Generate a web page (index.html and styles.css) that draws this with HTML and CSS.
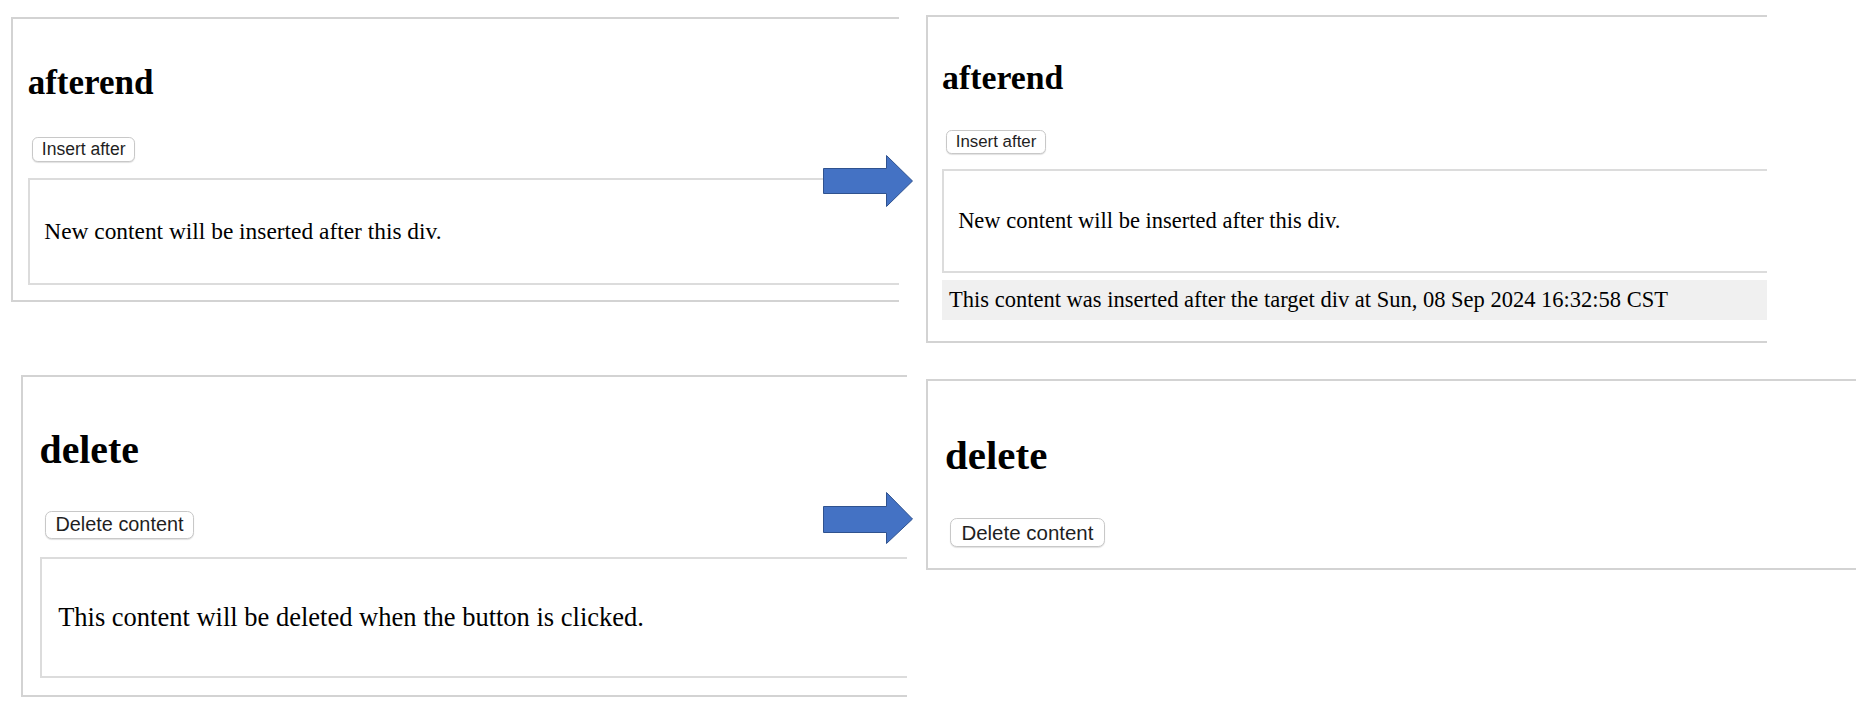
FILE: index.html
```html
<!DOCTYPE html>
<html lang="en">
<head>
<meta charset="utf-8">
<title>insertAdjacentHTML: afterend and delete</title>
<link rel="stylesheet" href="styles.css">
</head>
<body>
<main class="collage">
  <!-- afterend: before the click -->
  <section class="shot shot-a">
    <div class="demo">
      <h2>afterend</h2>
      <button class="demo-btn" type="button">Insert after</button>
      <div class="target"><p>New content will be inserted after this div.</p></div>
    </div>
  </section>

  <!-- afterend: after the click -->
  <section class="shot shot-b">
    <div class="demo">
      <h2>afterend</h2>
      <button class="demo-btn" type="button">Insert after</button>
      <div class="target"><p>New content will be inserted after this div.</p></div>
      <div class="inserted">This content was inserted after the target div at Sun, 08 Sep 2024 16:32:58 CST</div>
    </div>
  </section>

  <!-- delete: before the click -->
  <section class="shot shot-c">
    <div class="demo">
      <h2>delete</h2>
      <button class="demo-btn" type="button">Delete content</button>
      <div class="target"><p>This content will be deleted when the button is clicked.</p></div>
    </div>
  </section>

  <!-- delete: after the click -->
  <section class="shot shot-d">
    <div class="demo">
      <h2>delete</h2>
      <button class="demo-btn" type="button">Delete content</button>
    </div>
  </section>

  <svg class="arrow arrow-top" viewBox="0 0 90 52" width="90" height="52" aria-hidden="true">
    <path d="M0.5 13.5 H63.5 V0.5 L89.5 26 L63.5 51.5 V38.5 H0.5 Z" />
  </svg>
  <svg class="arrow arrow-bottom" viewBox="0 0 90 52" width="90" height="52" aria-hidden="true">
    <path d="M0.5 14.5 H63.5 V0.5 L89.5 27 L63.5 51.5 V40.5 H0.5 Z" />
  </svg>
</main>
</body>
</html>
```

FILE: styles.css
```css
html,
body {
  margin: 0;
  background: #ffffff;
}

body {
  width: 1856px;
  height: 718px;
  overflow: hidden;
}

/* two rows of before/after captures */
.collage {
  position: relative;
  display: grid;
  grid-template-columns: 926px 930px;
  grid-template-rows: 345px 373px;
  align-items: start;
}

/* each capture is a cropped window onto a small demo page */
.shot {
  overflow: hidden;
  font-family: "Liberation Serif", "Times New Roman", serif;
  color: #000000;
}

.shot-a {
  width: 888px;
  margin: 17px 0 0 11px;
  font-size: 23.4px;
}

.shot-b {
  width: 841px;
  margin-top: 15px;
  font-size: 22.5px;
}

.shot-c {
  width: 886px;
  margin: 30px 0 0 21px;
  font-size: 26.5px;
}

.shot-d {
  width: 930px;
  margin-top: 34px;
  font-size: 27.3px;
}

/* the demo container runs past the crop on the right */
.demo {
  box-sizing: border-box;
  width: calc(100% + 40px);
  border: 2px solid #d3d3d3;
  padding: 0.625em;
}

.demo h2 {
  font-size: 1.5em;
  font-weight: bold;
  line-height: normal;
  margin: 0.83em 0 0.963em;
}

.demo-btn {
  display: block;
  font-family: "Liberation Sans", Arial, sans-serif;
  font-size: 0.75em;
  line-height: normal;
  color: #1f1f1f;
  background: #ffffff;
  border: 1px solid #c8c8c8;
  border-radius: 0.33em;
  box-shadow: 0 1px 1px rgba(0, 0, 0, 0.12);
  padding: 0.07em 0.5em;
  margin: 0 0 0.167em 0.25em;
}

.target {
  border: 2px solid #dcdcdc;
  padding: 0.625em;
  margin-top: 0.6875em;
}

.target p {
  margin: 1em 0;
}

.inserted {
  background: #f0f0f0;
  margin: 0.3125em 0;
  padding: 0.3125em;
}

/* blue block arrows between the captures */
.arrow {
  position: absolute;
  left: 823px;
}

.arrow path {
  fill: #4472c4;
  stroke: #2f528f;
  stroke-width: 1;
}

.arrow-top {
  top: 155px;
}

.arrow-bottom {
  top: 492px;
}
```
